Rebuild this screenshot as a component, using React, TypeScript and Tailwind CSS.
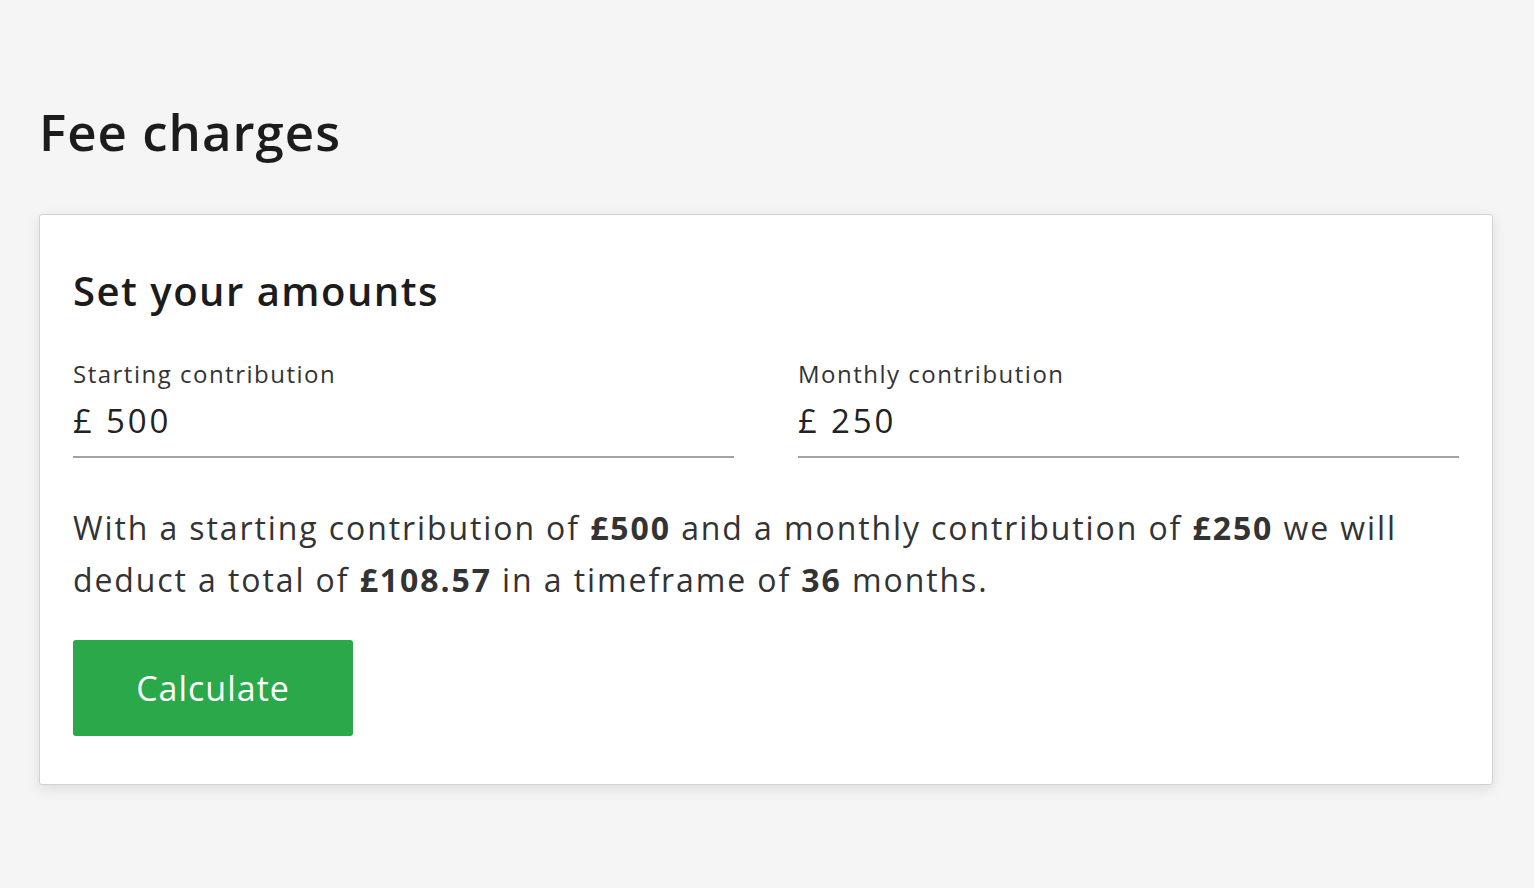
import React from "react";

const font = { fontFamily: '"Open Sans", "Liberation Sans", sans-serif' };

const Field = ({ label, value }: { label: string; value: string }) => (
  <div className="flex-1">
    <label className="block text-[24px] leading-[30px] tracking-[1.5px] text-[#333]">{label}</label>
    <div className="mt-[12px] border-b-2 border-[#a3a3a3] pb-[15px] text-[33px] leading-[40px] tracking-[2.8px] text-[#222]">
      {value}
    </div>
  </div>
);

export default function App() {
  return (
    <div className="min-h-screen bg-[#f5f5f5] pl-[39px] pr-[41px] pt-[99px]" style={font}>
      <h1 className="text-[51px] font-semibold leading-[64px] tracking-[1px] text-[#1c1c1c]">Fee charges</h1>

      <div className="mt-[51px] rounded-[3px] border border-[#d2d2d2] bg-white px-[33px] pb-[48px] pt-[48px] shadow-[0_4px_14px_rgba(0,0,0,0.10)]">
        <h2 className="text-[40px] font-semibold leading-[56px] tracking-[1.5px] text-[#1c1c1c]">Set your amounts</h2>

        <div className="mt-[40px] flex gap-[64px]">
          <Field label="Starting contribution" value="£ 500" />
          <Field label="Monthly contribution" value="£ 250" />
        </div>

        <p className="mt-[44px] text-[32px] leading-[52px] tracking-[1.9px] text-[#333]">
          With a starting contribution of <strong className="font-bold">£500</strong> and a monthly
          contribution of <strong className="font-bold">£250</strong> we will deduct a total of{" "}
          <strong className="font-bold">£108.57</strong> in a timeframe of{" "}
          <strong className="font-bold">36</strong> months.
        </p>

        <button
          type="button"
          className="mt-[34px] h-[96px] w-[280px] rounded-[3px] bg-[#2aa84a] text-[34px] tracking-[1px] text-white"
        >
          Calculate
        </button>
      </div>
    </div>
  );
}
